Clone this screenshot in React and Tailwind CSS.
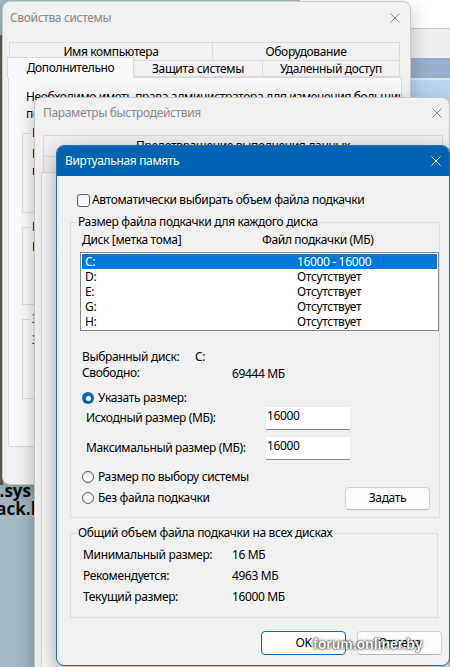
import React from "react";

const font = "font-['Noto_Sans','Open_Sans',sans-serif]";

function CloseIcon({ color }) {
  return (
    <svg width="10" height="10" viewBox="0 0 10 10" className="block">
      <path d="M0.5 0.5L9.5 9.5M9.5 0.5L0.5 9.5" stroke={color} strokeWidth="1" fill="none" />
    </svg>
  );
}

function Radio({ checked }) {
  if (checked) {
    return (
      <span className="w-[12px] h-[12px] rounded-full bg-[#0067c0] flex items-center justify-center shrink-0">
        <span className="w-[5px] h-[5px] rounded-full bg-white" />
      </span>
    );
  }
  return <span className="w-[12px] h-[12px] rounded-full border border-[#5c5c5c] bg-[#f6f6f6] shrink-0" />;
}

function Desktop() {
  return (
    <>
      {/* explorer window behind, top right */}
      <div className="absolute left-[300px] top-0 w-[150px] h-[120px] flex flex-col">
        <div className="h-[28px] bg-white" />
        <div className="h-px bg-[#c9c9c9]" />
        <div className="h-[29px] bg-[#efefef]" />
        <div className="h-[20px] bg-[#98afcb]" />
        <div className="h-[2px] bg-[#dde6ef]" />
        <div className="flex-1 bg-[#bad7f0]" />
      </div>
      <div className="absolute left-0 top-[35px] w-[3px] h-[450px] bg-[#6b5f4e]" />
      <div className="absolute left-0 top-[482px] font-['Open_Sans',sans-serif] font-bold text-[17px] leading-[18px] tracking-normal text-[#111]">
        <div className="w-[31px] flex justify-end whitespace-nowrap">pagefile.sys</div>
        <div className="w-[56px] flex justify-end whitespace-nowrap">DumpStack.log</div>
      </div>
    </>
  );
}

function SystemProperties() {
  return (
    <div className="absolute left-[2px] top-[1px] w-[409px] h-[484px] rounded-[8px] border border-[#c8c8c8] bg-[#f0f0f0] overflow-hidden shadow-[0_6px_20px_rgba(0,0,0,0.25)] flex flex-col">
      <div className="h-[31px] flex items-center justify-between pl-[7px] pr-[10px] text-[#8a8a8a]">
        <span>Свойства системы</span>
        <CloseIcon color="#8a8a8a" />
      </div>
      <div className="mt-[9px] ml-[6px] flex">
        <div className="w-[204px] h-[18px] border border-[#d9d9d9] border-b-0 flex items-center justify-center">Имя компьютера</div>
        <div className="w-[187px] h-[18px] border border-[#d9d9d9] border-l-0 border-b-0 flex items-center justify-center">Оборудование</div>
      </div>
      <div className="-mt-[3px] ml-[4px] h-[21px] flex items-start relative z-10">
        <div className="w-[127px] h-[21px] bg-[#f9f9f9] border border-[#d9d9d9] border-b-0 flex items-center justify-center">Дополнительно</div>
        <div className="mt-[3px] w-[129px] h-[17px] border border-[#d9d9d9] border-l-0 flex items-center justify-center">Защита системы</div>
        <div className="mt-[3px] w-[137px] h-[17px] border border-[#d9d9d9] border-l-0 flex items-center justify-center">Удаленный доступ</div>
      </div>
      <div className="-mt-[1px] ml-[5px] w-[394px] h-[370px] bg-[#f9f9f9] border border-[#d9d9d9] overflow-hidden flex flex-col">
        <p className="pt-[10px] pl-[17px] leading-[17px] whitespace-nowrap">
          Необходимо иметь права администратора для изменения большинства
          <br />
          перечисленных параметров.
        </p>
        <fieldset className="mt-[3px] ml-[13px] w-[370px] h-[88px] border border-[#dcdcdc]">
          <legend className="ml-[7px] px-[2px] leading-[16px]">Быстродействие</legend>
          <p className="mt-[4px] pl-[9px] leading-[17px]">
            Визуальные эффекты, использование процессора, памяти и
            <br />
            виртуальной памяти
          </p>
        </fieldset>
        <fieldset className="mt-[6px] ml-[13px] w-[370px] h-[86px] border border-[#dcdcdc]">
          <legend className="ml-[7px] px-[2px] leading-[16px]">Профили пользователей</legend>
          <p className="mt-[3px] pl-[9px] leading-[17px]">Параметры рабочего стола, относящиеся ко входу в систему</p>
        </fieldset>
        <fieldset className="mt-[6px] ml-[13px] w-[370px] h-[88px] border border-[#dcdcdc]">
          <legend className="ml-[7px] px-[2px] leading-[16px]">Загрузка и восстановление</legend>
          <p className="mt-[4px] pl-[9px] leading-[17px]">Загрузка и восстановление системы, отладочная информация</p>
        </fieldset>
      </div>
    </div>
  );
}

function PerformanceOptions() {
  return (
    <div className="absolute left-[34px] top-[97px] w-[416px] h-[600px] rounded-t-[8px] border border-[#c4c4c4] bg-[#f0f0f0] overflow-hidden shadow-[0_6px_20px_rgba(0,0,0,0.25)] flex flex-col">
      <div className="h-[30px] shrink-0 flex items-center justify-between pl-[8px] pr-[7px] text-[#8a8a8a]">
        <span>Параметры быстродействия</span>
        <CloseIcon color="#8a8a8a" />
      </div>
      <div className="pt-[7px] pl-[8px] flex flex-col flex-1">
        <div className="w-[400px] h-[21px] border border-[#d9d9d9] border-b-0 flex items-center justify-center">
          Предотвращение выполнения данных
        </div>
        <div className="flex h-[16px]">
          <div className="w-[150px] border border-[#d9d9d9] border-b-0 flex items-center justify-center">Визуальные эффекты</div>
          <div className="w-[110px] border border-[#d9d9d9] border-l-0 border-b-0 flex items-center justify-center">Дополнительно</div>
        </div>
        <div className="-ml-[2px] w-[402px] flex-1 bg-[#f9f9f9] border border-[#d9d9d9]" />
      </div>
    </div>
  );
}

function VirtualMemory() {
  const drives = [
    ["C:", "16000 - 16000", true],
    ["D:", "Отсутствует"],
    ["E:", "Отсутствует"],
    ["G:", "Отсутствует"],
    ["H:", "Отсутствует"],
  ];
  return (
    <div className="absolute left-[56px] top-[145px] w-[394px] h-[521px] rounded-[8px] border border-[#1b6db5] bg-[#f0f0f0] overflow-hidden shadow-[0_8px_24px_rgba(0,0,0,0.35)] flex flex-col text-black">
      <div className="h-[30px] shrink-0 bg-[#0063b1] flex items-center justify-between pl-[8px] pr-[8px] text-white">
        <span>Виртуальная память</span>
        <CloseIcon color="#ffffff" />
      </div>
      <div className="flex flex-col pl-[13px] pr-[7px]">
        <label className="mt-[16px] ml-[7px] h-[16px] flex items-center gap-[2px]">
          <span className="w-[13px] h-[13px] rounded-[3px] border border-[#5c5c5c] bg-[#f6f6f6]" />
          <span>Автоматически выбирать объем файла подкачки</span>
        </label>

        <fieldset className="mt-[6px] w-[368px] border border-[#dcdcdc] pb-[7px]">
          <legend className="ml-[6px] px-[1px] leading-[16px]">Размер файла подкачки для каждого диска</legend>
          <div className="mt-[2px] h-[16px] flex items-center pl-[11px]">
            <span className="w-[180px]">Диск [метка тома]</span>
            <span>Файл подкачки (МБ)</span>
          </div>
          <div className="mt-[4px] ml-[9px] w-[359px] h-[79px] border border-[#828790] bg-white p-[1px]">
            {drives.map(([d, v, sel]) => (
              <div key={d} className={`h-[15px] flex items-center pl-[3px] ${sel ? "bg-[#0078d7] text-white" : ""}`}>
                <span className="w-[212px]">{d}</span>
                <span>{v}</span>
              </div>
            ))}
          </div>
          <div className="mt-[18px] h-[16px] flex items-center pl-[11px]">
            <span className="w-[113px]">Выбранный диск:</span>
            <span>C:</span>
          </div>
          <div className="h-[16px] flex items-center pl-[11px]">
            <span className="w-[150px]">Свободно:</span>
            <span className="pt-[2px]">69444 МБ</span>
          </div>
          <div className="mt-[9px] h-[16px] flex items-center gap-[4px] pl-[11px]">
            <Radio checked />
            <span>Указать размер:</span>
          </div>
          <div className="h-[24px] flex items-center pl-[15px]">
            <span className="w-[179px]">Исходный размер (МБ):</span>
            <div className="w-[86px] h-[24px] bg-white border border-[#ececec] border-b-[#868686] rounded-[2px] pl-[1px] pt-[1px] leading-[16px]">16000</div>
          </div>
          <div className="mt-[6px] h-[24px] flex items-center pl-[15px]">
            <span className="w-[179px]">Максимальный размер (МБ):</span>
            <div className="w-[86px] h-[24px] bg-white border border-[#ececec] border-b-[#868686] rounded-[2px] pl-[1px] pt-[1px] leading-[16px]">16000</div>
          </div>
          <div className="mt-[9px] h-[16px] flex items-center gap-[4px] pl-[11px]">
            <Radio />
            <span>Размер по выбору системы</span>
          </div>
          <div className="mt-[1px] h-[24px] flex items-center pl-[11px]">
            <Radio />
            <span className="ml-[4px]">Без файла подкачки</span>
            <button className="ml-auto mr-[9px] w-[85px] h-[23px] rounded-[4px] border border-[#d0d0d0] border-b-[#b8b8b8] bg-[#fdfdfd]">
              Задать
            </button>
          </div>
        </fieldset>

        <fieldset className="mt-[7px] w-[368px] border border-[#dcdcdc] pb-[10px]">
          <legend className="ml-[6px] px-[1px] leading-[16px]">Общий объем файла подкачки на всех дисках</legend>
          <div className="mt-[3px] h-[21px] flex items-center pl-[12px]">
            <span className="w-[149px]">Минимальный размер:</span>
            <span>16 МБ</span>
          </div>
          <div className="h-[21px] flex items-center pl-[12px]">
            <span className="w-[149px]">Рекомендуется:</span>
            <span>4963 МБ</span>
          </div>
          <div className="h-[21px] flex items-center pl-[12px]">
            <span className="w-[149px]">Текущий размер:</span>
            <span>16000 МБ</span>
          </div>
        </fieldset>

        <div className="mt-[13px] flex justify-end gap-[11px]">
          <button className="w-[85px] h-[24px] rounded-[4px] border border-[#0067c0] bg-[#fdfdfd]">OK</button>
          <button className="w-[85px] h-[24px] rounded-[4px] border border-[#d0d0d0] border-b-[#b8b8b8] bg-[#fdfdfd]">Отмена</button>
        </div>
      </div>
    </div>
  );
}

export default function App() {
  return (
    <div className={`relative w-[450px] h-[667px] overflow-hidden bg-[#a3b9c3] text-[12px] leading-[16px] tracking-[-0.35px] text-[#000] ${font}`}>
      <Desktop />
      <SystemProperties />
      <PerformanceOptions />
      <VirtualMemory />
      <div className="absolute left-[313px] top-[635px] font-['Liberation_Sans',sans-serif] font-bold text-[14px] leading-[18px] tracking-normal text-white [text-shadow:0_0_3px_rgba(0,0,0,0.95),0_0_1px_#000]">
        forum.onliner.by
      </div>
    </div>
  );
}
